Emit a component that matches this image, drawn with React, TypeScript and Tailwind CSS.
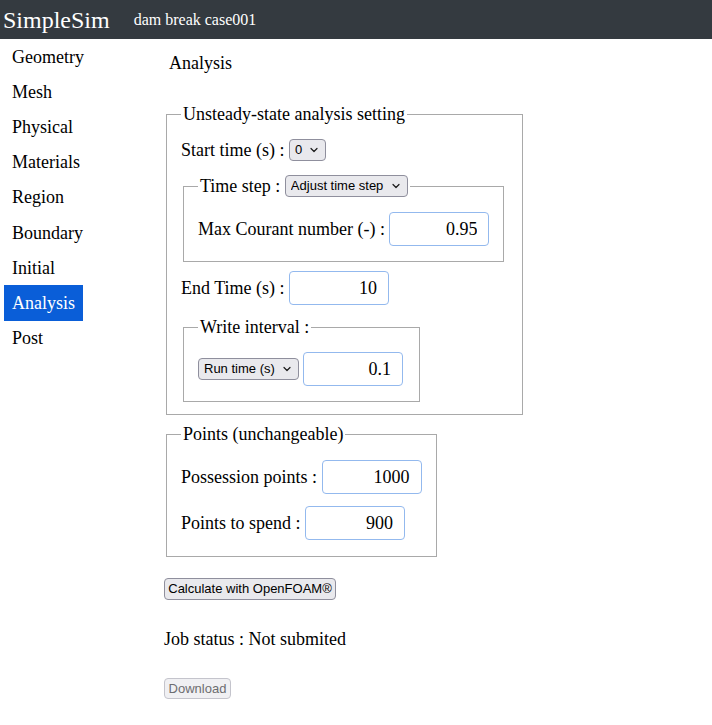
import { ChevronDown } from "lucide-react";

const serif = { fontFamily: '"Liberation Serif", "Times New Roman", serif' };

const navItems = ["Geometry", "Mesh", "Physical", "Materials", "Region", "Boundary", "Initial", "Analysis", "Post"];

function Select({ value, options, width }: { value: string; options: string[]; width: string }) {
  return (
    <span className={`relative inline-flex h-[22px] shrink-0 ${width}`}>
      <select
        defaultValue={value}
        className="h-full w-full appearance-none rounded-[4px] border border-[#8f8f9d] bg-[#e9e9ed] pl-[5px] pr-[20px] font-['Liberation_Sans',Arial,sans-serif] text-[13px] leading-[20px] text-black"
      >
        {options.map((o) => (
          <option key={o}>{o}</option>
        ))}
      </select>
      <ChevronDown
        size={12}
        strokeWidth={2.4}
        className="pointer-events-none absolute right-[6px] top-[5px] text-[#1a1a1a]"
      />
    </span>
  );
}

function NumInput({ value }: { value: string }) {
  return (
    <input
      defaultValue={value}
      className="h-[34px] w-[100px] shrink-0 rounded-[4px] border border-[#93b9ee] bg-white pr-[11px] text-right text-[18px] text-black outline-none"
      style={serif}
    />
  );
}

export default function App() {
  return (
    <div className="min-h-screen bg-white text-[18px] leading-[20px] text-black" style={serif}>
      <header className="flex h-[39px] items-center bg-[#343a40] text-white">
        <span className="ml-[3px] text-[24px] leading-[28px]">SimpleSim</span>
        <span className="ml-[24px] mt-[1px] text-[16px]">dam break case001</span>
      </header>

      <div className="flex">
        <nav className="ml-[4px] flex w-[160px] flex-col">
          {navItems.map((item) => (
            <a
              key={item}
              href="#"
              className={`flex h-[35.2px] w-fit items-center px-[8px] ${
                item === "Analysis" ? "bg-[#0a5ed8] text-white" : "text-black"
              }`}
            >
              {item}
            </a>
          ))}
        </nav>

        <main className="flex flex-col items-start whitespace-nowrap">
          <h2 className="ml-[5px] mt-[14px] font-normal">Analysis</h2>

          <fieldset className="ml-[2px] mt-[31px] w-[357px] border border-[#a9a9a9] px-[14px] pb-[12px]">
            <legend className="px-[2px] leading-[20px]">Unsteady-state analysis setting</legend>

            <div className="mt-[15px] flex h-[22px] items-center">
              <span>Start time (s) :&nbsp;</span>
              <Select value="0" options={["0"]} width="w-[37px]" />
            </div>

            <fieldset className="ml-[2px] mt-[14px] w-[321px] border border-[#a9a9a9] px-[14px] pb-[15px]">
              <legend className="flex h-[22px] items-center px-[2px]">
                <span>Time step :&nbsp;</span>
                <Select value="Adjust time step" options={["Adjust time step", "Fixed time step"]} width="w-[123px]" />
              </legend>
              <div className="mt-[15px] flex h-[34px] items-center">
                <span className="shrink-0">Max Courant number (-) :&nbsp;</span>
                <NumInput value="0.95" />
              </div>
            </fieldset>

            <div className="mt-[9px] flex h-[34px] items-center">
              <span>End Time (s) :&nbsp;</span>
              <NumInput value="10" />
            </div>

            <fieldset className="ml-[2px] mt-[12px] w-[237px] border border-[#a9a9a9] px-[14px] pb-[15px]">
              <legend className="px-[2px] leading-[20px]">Write interval :</legend>
              <div className="mt-[15px] flex h-[34px] items-center gap-[4px]">
                <Select value="Run time (s)" options={["Run time (s)", "Time step"]} width="w-[101px]" />
                <NumInput value="0.1" />
              </div>
            </fieldset>
          </fieldset>

          <fieldset className="ml-[2px] mt-[9px] w-[271px] border border-[#a9a9a9] px-[14px] pb-[16px]">
            <legend className="px-[2px] leading-[20px]">Points (unchangeable)</legend>
            <div className="mt-[16px] flex h-[34px] items-center">
              <span>Possession points :&nbsp;</span>
              <NumInput value="1000" />
            </div>
            <div className="mt-[12px] flex h-[34px] items-center">
              <span>Points to spend :&nbsp;</span>
              <NumInput value="900" />
            </div>
          </fieldset>

          <button className="mt-[21px] h-[22px] w-[172px] rounded-[4px] border border-[#8f8f9d] bg-[#e9e9ed] font-['Liberation_Sans',Arial,sans-serif] text-[13px] leading-[20px] text-black">
            Calculate with OpenFOAM®
          </button>

          <p className="mt-[29px]">Job status : Not submited</p>

          <button
            disabled
            className="mt-[29px] h-[21px] w-[67px] rounded-[4px] border border-[#c4c4cc] bg-[#f0f0f3] font-['Liberation_Sans',Arial,sans-serif] text-[13px] leading-[19px] text-[#6d6d70]"
          >
            Download
          </button>
        </main>
      </div>
    </div>
  );
}
